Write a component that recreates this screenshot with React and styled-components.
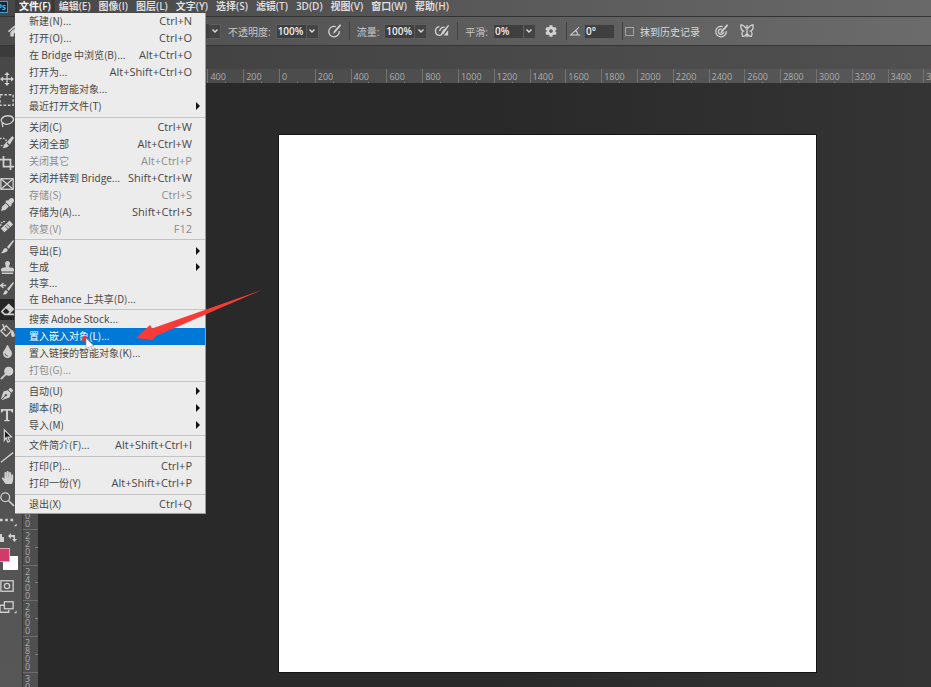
import styled, { createGlobalStyle } from "styled-components";
import {
	FaHome,
	FaEyeDropper,
	FaPaintBrush,
	FaStamp,
	FaEraser,
	FaTint,
	FaPenNib,
	FaHandPaper,
	FaCog,
} from "react-icons/fa";

// document geometry
const DOC_SIZE = 537;
const DOC_UNITS = 3000;
const STEP = (DOC_SIZE / DOC_UNITS) * 200;
const DOC_LEFT = 241;
const DOC_TOP = 52;

// first marks that are not covered by the open menu
const FIRST_X = -400;
const FIRST_Y = 2000;

const GlobalStyle = createGlobalStyle`
	* {
		box-sizing: border-box;
	}
	body {
		margin: 0;
		background: #292929;
		font-family: "Open Sans", "Noto Sans CJK SC", sans-serif;
		font-size: 10px;
		overflow: hidden;
	}
	button, input, select {
		font: inherit;
		color: inherit;
		border: 0;
		padding: 0;
		margin: 0;
		background: none;
	}
	ul {
		list-style: none;
		margin: 0;
		padding: 0;
	}
`;

const Shell = styled.div`
	position: relative;
	display: flex;
	flex-direction: column;
	height: 100vh;
	color: #dcdcdc;
`;

const MenuBar = styled.nav`
	position: relative;
	z-index: 2;
	display: flex;
	align-items: center;
	gap: 8px;
	height: 16px;
	padding-bottom: 3px;
	background: linear-gradient(90deg, #474747, #696969);
`;

const Logo = styled.span`
	display: flex;
	align-items: center;
	justify-content: flex-end;
	width: 8px;
	height: 12px;
	margin-right: 3px;
	padding-right: 1px;
	background: #0b2a3c;
	border: 1px solid #3aa0cf;
	border-left: 0;
	color: #4db8ea;
	font-size: 8px;
	font-weight: 700;
	overflow: hidden;
`;

const MenuTitle = styled.button`
	height: 13px;
	line-height: 13px;
	font-weight: 600;
	white-space: nowrap;
	color: ${({ $open }) => ($open ? "#ffffff" : "#dedede")};
	box-shadow: ${({ $open }) => ($open ? "0 0 0 4px #3a3a3a" : "none")};
`;

const Dropdown = styled.div`
	position: absolute;
	top: 13px;
	left: 15px;
	width: 191px;
	background: #ececec;
	border: solid #9c9c9c;
	border-width: 0 1px 1px 0;
	color: #484848;
`;

const Group = styled.ul`
	padding: ${({ $start }) => $start ?? 1}px 0 ${({ $end }) => $end ?? 2}px;
	border-bottom: 1px solid #c4c4c4;

	&:first-child {
		padding-top: 0;
	}
	&:last-child {
		padding-bottom: 0;
		border-bottom: 0;
	}
`;

const Item = styled.button`
	display: flex;
	align-items: center;
	justify-content: space-between;
	width: 100%;
	height: ${({ $compact }) => ($compact ? 16 : 17)}px;
	padding: 0 13px 1px 14px;
	line-height: 16px;
	white-space: nowrap;
	background: ${({ $active }) => ($active ? "#0078d7" : "transparent")};
	color: ${({ $active }) => ($active ? "#ffffff" : "inherit")};

	&:disabled {
		color: #8c8c8c;
	}
`;

const ItemName = styled.span`
	font-family: "Noto Sans CJK SC", sans-serif;
`;

const Shortcut = styled.span`
	font-size: 11px;
`;

const SubArrow = styled.svg`
	width: 5px;
	height: 8px;
	margin-right: -9px;
`;

const OptionsBar = styled.div`
	display: flex;
	align-items: center;
	height: 29px;
	flex-shrink: 0;
	padding-left: 7px;
	border-top: 1px solid #333333;
	background: linear-gradient(90deg, #4c4c4c, #6b6b6b);
	white-space: nowrap;
`;

const Preset = styled.select`
	width: 156px;
	height: 14px;
	margin-left: 30px;
	appearance: none;
	background: #3e3e3e;
`;

const IconButton = styled.button`
	display: flex;
	align-items: center;
	justify-content: center;
	width: 16px;
	height: 16px;
	margin-left: ${({ $gap }) => $gap ?? 7}px;
	color: #d2d2d2;
`;

const FieldLabel = styled.label`
	margin-left: 7px;
	margin-right: 5px;
	color: #c8c8c8;
`;

const Field = styled.input`
	width: 31px;
	height: 15px;
	padding-left: 1px;
	background: #3f3f3f;
	border: 1px solid #5d5d5d;
	color: #f0f0f0;
	font-weight: 600;
`;

const Caret = styled.button`
	display: flex;
	align-items: center;
	justify-content: center;
	width: 12px;
	height: 15px;
	background: #434343;
	border: 1px solid #5d5d5d;
	border-left: 0;
`;

const Divider = styled.span`
	width: 1px;
	height: 18px;
	margin-left: 7px;
	background: #404040;
`;

const Check = styled.input`
	appearance: none;
	width: 9px;
	height: 9px;
	margin-left: 2px;
	border: 1px solid #a5a5a5;
`;

const CheckLabel = styled.label`
	margin-left: 6px;
	color: #d8d8d8;
`;

const Body = styled.div`
	display: flex;
	flex: 1;
	min-height: 0;
`;

const Toolbar = styled.aside`
	display: flex;
	flex-direction: column;
	width: 22px;
	flex-shrink: 0;
	background: linear-gradient(#484848, #575757);
	border-top: 1px solid #363636;
	color: #d0d0d0;
`;

const Grip = styled.div`
	height: 11px;
	margin-bottom: 11px;
	background: #3b3b3b;
`;

const Tool = styled.button`
	display: flex;
	align-items: center;
	justify-content: center;
	width: 14px;
	height: 21px;
	flex-shrink: 0;
	background: ${({ $active }) => ($active ? "#262626" : "transparent")};
`;

const ColorTools = styled.div`
	display: flex;
	justify-content: space-between;
	align-items: center;
	width: 17px;
	height: 15px;
	margin-bottom: 3px;
`;

const Swatches = styled.div`
	display: grid;
	grid-template: 8px 6px 8px / 3px 7px 8px;
	margin-bottom: 5px;
`;

const Swatch = styled.button`
	grid-area: ${({ $front }) => ($front ? "1 / 1 / 3 / 3" : "2 / 2 / 4 / 4")};
	z-index: ${({ $front }) => ($front ? 1 : 0)};
	background: ${({ $color }) => $color};
	border: ${({ $front }) => ($front ? "1px solid #eaa0ba" : "0")};
	border-left: 0;
`;

const Workspace = styled.main`
	display: flex;
	flex-direction: column;
	flex: 1;
	min-width: 0;
`;

const TabStrip = styled.div`
	height: 24px;
	flex-shrink: 0;
	border-top: 1px solid #363636;
	background: linear-gradient(90deg, #404040, #505050);
`;

const TopRuler = styled.div`
	display: grid;
	grid-auto-flow: column;
	grid-auto-columns: ${STEP}px;
	height: 14px;
	flex-shrink: 0;
	padding-left: ${16 + DOC_LEFT + (FIRST_X / 200) * STEP}px;
	background: linear-gradient(90deg, #474747, #585858);
	overflow: hidden;
`;

const TopMark = styled.span`
	display: flex;
	padding-left: 2px;
	border-left: 1px solid #727272;
	font-size: 9px;
	line-height: 16px;
	color: #adadad;
	background: linear-gradient(#808080, #808080) 50% 100% / 1px 3px no-repeat;
`;

const Row = styled.div`
	display: flex;
	flex: 1;
	min-height: 0;
`;

const SideRuler = styled.div`
	display: grid;
	grid-auto-rows: ${STEP}px;
	align-content: start;
	width: 16px;
	flex-shrink: 0;
	padding-top: ${DOC_TOP + (FIRST_Y / 200) * STEP}px;
	background: linear-gradient(#474747, #505050);
	border-left: 1px solid #393939;
	overflow: hidden;
`;

const SideMark = styled.span`
	display: flex;
	flex-direction: column;
	width: 15px;
	padding: 2px 0 0 2px;
	border-top: 1px solid #6c6c6c;
	font-size: 9px;
	line-height: 8px;
	color: #adadad;
	background: linear-gradient(#808080, #808080) 100% 50% / 3px 1px no-repeat;
`;

const Stage = styled.div`
	flex: 1;
	min-width: 0;
	padding: ${DOC_TOP}px 0 0 ${DOC_LEFT}px;
	background: linear-gradient(90deg, #292929, #292929 50%, #343434);
	overflow: hidden;
`;

const Artboard = styled.div`
	width: ${DOC_SIZE}px;
	height: ${DOC_SIZE}px;
	background: #ffffff;
	box-shadow: 0 0 0 1px #151515;
`;

const Annotation = styled.svg`
	position: absolute;
	z-index: 3;
	left: 80px;
	top: 285px;
	width: 190px;
	height: 70px;
	pointer-events: none;
`;

const fileMenu = [
	{
		items: [
			["新建(N)...", "Ctrl+N"],
			["打开(O)...", "Ctrl+O"],
			["在 Bridge 中浏览(B)...", "Alt+Ctrl+O"],
			["打开为...", "Alt+Shift+Ctrl+O"],
			["打开为智能对象..."],
			["最近打开文件(T)", "sub"],
		],
	},
	{
		end: 1,
		items: [
			["关闭(C)", "Ctrl+W"],
			["关闭全部", "Alt+Ctrl+W"],
			["关闭其它", "Alt+Ctrl+P", "off"],
			["关闭并转到 Bridge...", "Shift+Ctrl+W"],
			["存储(S)", "Ctrl+S", "off"],
			["存储为(A)...", "Shift+Ctrl+S"],
			["恢复(V)", "F12", "off"],
		],
	},
	{
		start: 3,
		end: 2,
		compact: true,
		items: [
			["导出(E)", "sub"],
			["生成", "sub"],
			["共享..."],
			["在 Behance 上共享(D)..."],
		],
	},
	{
		items: [
			["搜索 Adobe Stock..."],
			["置入嵌入对象(L)...", "", "active"],
			["置入链接的智能对象(K)..."],
			["打包(G)...", "", "off"],
		],
	},
	{
		end: 1,
		items: [
			["自动(U)", "sub"],
			["脚本(R)", "sub"],
			["导入(M)", "sub"],
		],
	},
	{ items: [["文件简介(F)...", "Alt+Shift+Ctrl+I"]] },
	{
		items: [
			["打印(P)...", "Ctrl+P"],
			["打印一份(Y)", "Alt+Shift+Ctrl+P"],
		],
	},
	{ items: [["退出(X)", "Ctrl+Q"]] },
];

const titles = ["文件(F)", "编辑(E)", "图像(I)", "图层(L)", "文字(Y)", "选择(S)", "滤镜(T)", "3D(D)", "视图(V)", "窗口(W)", "帮助(H)"];

const Glyph = ({ children, size = 14 }) => (
	<svg width={size} height={size} viewBox="0 0 16 16" fill="none" stroke="currentColor" strokeWidth="1.5" overflow="visible">
		{children}
	</svg>
);

const tools = [
	["移动", <Glyph><path d="M8 2v12M2 8h12" /><path d="M8 0l3 3.500H5zM8 16l3-3.500H5zM0 8l3.500-3v6zM16 8l-3.500-3v6z" fill="currentColor" stroke="none" /></Glyph>],
	["选框", <Glyph><rect x="0" y="2" width="15" height="12" strokeDasharray="3 2" /></Glyph>],
	["套索", <Glyph><path d="M3 10C-1 7 3 2 9 2s8 4 5 7-8 4-11 1zm0 0c-2 2 1 2 0 5" /></Glyph>],
	["快速选择", <Glyph><circle cx="3" cy="8" r="4.500" strokeDasharray="2 1.500" /><path d="M14 1l2 2-5 8-3-3zM7 9l3 3c-1 2-4 3-7 3 2-2 1-5 4-6z" fill="currentColor" stroke="none" /></Glyph>],
	["裁剪", <Glyph><path d="M4 0v12h12M0 4h12v12" strokeWidth="2" /></Glyph>],
	["图框", <Glyph><rect x="1" y="2" width="14" height="12" /><path d="M1 2l14 12M15 2L1 14" /></Glyph>],
	["吸管", <FaEyeDropper size={13} />],
	["修复画笔", <Glyph><path d="M1 8a4 4 0 0 1 5-5" strokeDasharray="2 1" /><path d="M3 13L13 4" strokeWidth="6" /><path d="M6 8l4 4M8 6l4 4" stroke="#4c4c4c" strokeWidth="1" /></Glyph>],
	["画笔", <Glyph><path d="M15 0l1 1-6 9-2-2zM7 9l2 2c-1 3-5 4-8 4 3-2 2-6 6-6z" fill="currentColor" stroke="none" /></Glyph>],
	["仿制图章", <FaStamp size={13} />],
	["历史记录画笔", <Glyph><path d="M0 4h7M1 4l3-3M1 4l3 3" /><path d="M15 0l1 1-6 9-2-2zM7 9l2 2c-1 3-4 4-6 3 2-1 1-4 4-5z" fill="currentColor" stroke="none" /></Glyph>],
	["橡皮擦", <FaEraser size={13} />],
	["油漆桶", <Glyph><path d="M1 8l6-6 6 6-6 6zM6 8L3 0" /><path d="M14 8c2 2 3 6 1 6s-2-3-1-6z" fill="currentColor" /></Glyph>],
	["模糊", <FaTint size={13} />],
	["减淡", <Glyph><circle cx="10" cy="6" r="4.500" fill="currentColor" /><path d="M7 9l-6 6" strokeWidth="2" /></Glyph>],
	["钢笔", <FaPenNib size={12} />],
	["文字", <Glyph><path d="M1 1h14v4h-1.500l-1-2H9.200v10.500l2 .5v1H4.800v-1l2-.5V3H3.500l-1 2H1z" fill="currentColor" stroke="none" /></Glyph>],
	["路径选择", <Glyph><path d="M5 1l8 8-4 .5 2 4.500-2 1-2-5-2 3z" fill="#151515" /></Glyph>],
	["直线", <Glyph><path d="M1 14L15 3" /></Glyph>],
	["抓手", <FaHandPaper size={13} />],
	["缩放", <Glyph><circle cx="6" cy="6" r="5" /><path d="M10 10l6 6" strokeWidth="2" /></Glyph>],
	["更多", <Glyph><path d="M0 8h3M6 8h3M12 8h3" strokeWidth="3" /><path d="M19 12v3h-3z" fill="currentColor" stroke="none" /></Glyph>],
];

const topLabels = Array.from({ length: 21 }, (_, i) => Math.abs(FIRST_X + i * 200));
const sideLabels = Array.from({ length: 6 }, (_, i) => FIRST_Y + i * 200);

const Chevron = () => (
	<svg width="8" height="6" viewBox="0 0 8 6" fill="none" stroke="currentColor" strokeWidth="1.400">
		<path d="M1.500 1.500l2.500 2.500 2.500-2.500" />
	</svg>
);

const Combo = ({ id, label, value }) => (
	<>
		<FieldLabel htmlFor={id}>{label}</FieldLabel>
		<Field id={id} defaultValue={value} />
		<Caret aria-label={label}>
			<Chevron />
		</Caret>
	</>
);

const FileMenu = () => (
	<Dropdown>
		{fileMenu.map((group, i) => (
			<Group key={i} $start={group.start} $end={group.end}>
				{group.items.map(([name, keys, state]) => (
					<li key={name}>
						<Item $compact={group.compact} $active={state === "active"} disabled={state === "off"}>
							<ItemName>{name}</ItemName>
							{keys === "sub" ? (
								<SubArrow viewBox="0 0 5 8">
									<path d="M0 0l4 4-4 4z" fill="#111111" />
								</SubArrow>
							) : (
								<Shortcut>{keys}</Shortcut>
							)}
						</Item>
					</li>
				))}
			</Group>
		))}
	</Dropdown>
);

const Options = () => (
	<OptionsBar>
		<IconButton $gap={0} aria-label="主页">
			<FaHome size={14} />
		</IconButton>
		<Preset aria-label="模式" />
		<Caret aria-label="模式">
			<Chevron />
		</Caret>
		<Combo id="opacity" label="不透明度:" value="100%" />
		<IconButton aria-label="不透明度压力">
			<Glyph>
				<path d="M10 3a6 6 0 1 0 4 5" />
				<path d="M15 0l1 2-7 8-2 1 1-3z" fill="currentColor" stroke="none" />
			</Glyph>
		</IconButton>
		<Divider />
		<Combo id="flow" label="流量:" value="100%" />
		<IconButton aria-label="喷枪">
			<Glyph>
				<path d="M5 3c-6 1-6 9 0 10 5 0 2-4 6-7M5 8c2-4 4-5 6-4" />
				<path d="M15 1l1 1-6 9-3 1 1-3zM10 13h5V7z" fill="currentColor" stroke="none" />
			</Glyph>
		</IconButton>
		<Divider />
		<Combo id="smooth" label="平滑:" value="0%" />
		<IconButton aria-label="平滑选项">
			<FaCog size={12} />
		</IconButton>
		<Divider />
		<IconButton $gap={1} aria-label="角度">
			<Glyph size={11}>
				<path d="M13 2L1 13h14M8 7c3 1 3 3 3 6" />
			</Glyph>
		</IconButton>
		<Field aria-label="画笔角度" defaultValue="0°" />
		<Divider />
		<Check id="history" type="checkbox" />
		<CheckLabel htmlFor="history">抹到历史记录</CheckLabel>
		<IconButton $gap={13} aria-label="大小压力">
			<Glyph>
				<path d="M10 3a6 6 0 1 0 4 5M9 6a3 3 0 1 0 2 3" />
				<path d="M15 0l1 2-7 8-2 1 1-3z" fill="currentColor" stroke="none" />
			</Glyph>
		</IconButton>
		<IconButton $gap={10} aria-label="对称">
			<Glyph>
				<path d="M7 5C5 2 3 1 1 1c0 4 0 6 3 7-2 1-2 4-1 6 2 0 4-1 4-3M9 5c2-3 4-4 6-4 0 4 0 6-3 7 2 1 2 4 1 6-2 0-4-1-4-3M8 1v14" />
			</Glyph>
		</IconButton>
	</OptionsBar>
);

const Tools = () => (
	<Toolbar>
		<Grip />
		{tools.map(([name, icon]) => (
			<Tool key={name} aria-label={name} $active={name === "橡皮擦"}>
				{icon}
			</Tool>
		))}
		<ColorTools>
			<svg width="4" height="8" viewBox="0 0 4 8">
				<path d="M0 0h2v3h2v5H0z" fill="currentColor" />
			</svg>
			<svg width="9" height="9" viewBox="0 0 9 9">
				<path d="M0 3l3-3v2h4v4h2L6.500 9 4 6h1.500V4H3v2z" fill="currentColor" />
			</svg>
		</ColorTools>
		<Swatches>
			<Swatch $front $color="#cf3c69" aria-label="前景色" />
			<Swatch $color="#ffffff" aria-label="背景色" />
		</Swatches>
		<Tool aria-label="快速蒙版">
			<Glyph>
				<rect x="1" y="2" width="14" height="12" />
				<circle cx="8" cy="8" r="3" />
			</Glyph>
		</Tool>
		<Tool aria-label="屏幕模式">
			<Glyph>
				<path d="M5 6H0v8h10v-3" />
				<rect x="5" y="2" width="10" height="8" />
				<path d="M19 12v3h-3z" fill="currentColor" stroke="none" />
			</Glyph>
		</Tool>
	</Toolbar>
);

const App = () => {
	return (
		<Shell>
			<GlobalStyle />
			<MenuBar>
				<Logo>Ps</Logo>
				{titles.map((title, i) => (
					<MenuTitle key={title} $open={i === 0}>
						{title}
					</MenuTitle>
				))}
				<FileMenu />
			</MenuBar>
			<Options />
			<Body>
				<Tools />
				<Workspace>
					<TabStrip />
					<TopRuler>
						{topLabels.map((n, i) => (
							<TopMark key={i}>{n}</TopMark>
						))}
					</TopRuler>
					<Row>
						<SideRuler>
							{sideLabels.map((n) => (
								<SideMark key={n}>
									{[...String(n)].map((digit, j) => (
										<span key={j}>{digit}</span>
									))}
								</SideMark>
							))}
						</SideRuler>
						<Stage>
							<Artboard />
						</Stage>
					</Row>
				</Workspace>
			</Body>
			<Annotation viewBox="0 0 190 70">
				<path d="M56 53L70 40l2 3.500L182 5 76 51l-3 4z" fill="#f93a37" />
				<circle cx="5" cy="54" r="3" fill="#d33a4c" />
				<path d="M6 53v11l2.500-2 2 4 2-1-2-4h3.500z" fill="#ffffff" stroke="#777777" strokeWidth="0.500" />
			</Annotation>
		</Shell>
	);
};

export default App;
